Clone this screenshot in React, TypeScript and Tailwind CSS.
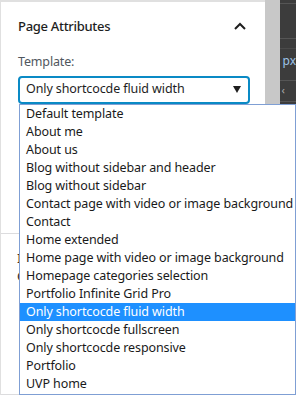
import React from "react";

const items = [
  "Default template",
  "About me",
  "About us",
  "Blog without sidebar and header",
  "Blog without sidebar",
  "Contact page with video or image background",
  "Contact",
  "Home extended",
  "Home page with video or image background",
  "Homepage categories selection",
  "Portfolio Infinite Grid Pro",
  "Only shortcocde fluid width",
  "Only shortcocde fullscreen",
  "Only shortcocde responsive",
  "Portfolio",
  "UVP home",
];

export default function App() {
  const font = { fontFamily: '"Noto Sans", "Open Sans", sans-serif' };
  return (
    <div className="flex w-[296px] h-[395px] overflow-hidden bg-white" style={font}>
      <div className="relative w-[265px] h-full border-t-2 border-l border-[#e0e0e0] bg-white">
        <div className="flex items-center justify-between pl-[17px] pr-[17px] pt-[13px] h-[35px]">
          <span className="text-[13px] font-medium tracking-[-0.3px] text-[#1e1e1e] leading-none">Page Attributes</span>
          <svg width="12" height="8" viewBox="0 0 12 8" className="mr-[2px]">
            <path d="M1 7 L6 2 L11 7" fill="none" stroke="#1e1e1e" strokeWidth="2" />
          </svg>
        </div>
        <div className="pl-[17px] pt-[19px] text-[12.5px] tracking-[-0.15px] text-[#50575e] leading-none">Template:</div>
        <div className="ml-[17px] mt-[7px] w-[232px] h-[28px] rounded-[4px] border-2 border-[#0a8ac5] flex items-center justify-between pl-[6px] pr-[7px]">
          <span className="text-[12.5px] tracking-[-0.1px] text-[#1e1e1e] leading-none">Only shortcocde fluid width</span>
          <svg width="8" height="7" viewBox="0 0 8 7">
            <path d="M0 0 L8 0 L4 7 Z" fill="#1e1e1e" />
          </svg>
        </div>
        <div className="mt-[129px] border-t border-[#dcdcde] w-full" />
        <div className="pl-[16px] pt-[15px] text-[13px] text-[#3c2a1e] leading-[18px]">I</div>
        <div className="pl-[16px] text-[13px] text-[#1e1e1e] leading-[18px]">O</div>
        <div className="absolute left-0 right-0 bottom-0 border-b border-[#dcdcde]" />
        <div className="absolute left-[18px] top-[102px] w-[277px] h-[291px] border border-[#7f9fd4] bg-white z-10">
          {items.map((it) => (
            <div
              key={it}
              className={
                it === "Only shortcocde fluid width"
                  ? "h-[18px] pl-[6px] text-[12.5px] tracking-[-0.1px] leading-[18px] whitespace-nowrap bg-[#1e90ff] text-white"
                  : "h-[18px] pl-[6px] text-[12.5px] tracking-[-0.1px] leading-[18px] whitespace-nowrap text-[#1a1a1a]"
              }
            >
              {it}
            </div>
          ))}
        </div>
      </div>
      <div className="w-[15px] h-full bg-[#c8c8c8]" />
      <div className="relative flex-1 h-full bg-[#3c3c3c] flex flex-col">
        <div className="h-[3px]" />
        <div className="h-[1px] bg-[#555]" />
        <div className="h-[34px]" />
        <div className="h-[1px] bg-[#555]" />
        <div className="h-[9px]" />
        <div className="h-[1px] bg-[#4a4a4a]" />
        <div className="h-[5px]" />
        <div className="text-[12px] leading-[14px] text-[#9cc3e8] pl-[3px]">px</div>
        <div className="h-[12px]" />
        <div className="h-[1px] bg-[#555]" />
        <div className="text-[11px] leading-[14px] text-[#aaa] pl-[2px] mt-[2px]">‹</div>
        <div className="h-[4px]" />
        <div className="h-[1px] bg-[#555]" />
      </div>
    </div>
  );
}
